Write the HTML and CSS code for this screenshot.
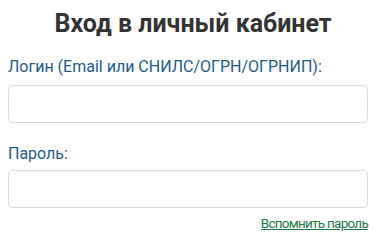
FILE: index.html
```html
<!DOCTYPE html>
<html lang="ru">
<head>
<meta charset="utf-8">
<title>Вход в личный кабинет</title>
<link rel="stylesheet" href="styles.css">
</head>
<body>
<div class="login">
  <h1 class="title">Вход в личный кабинет</h1>
  <label class="label label-login" for="login">Логин (Email или СНИЛС/ОГРН/ОГРНИП):</label>
  <input class="field field-login" id="login" type="text">
  <label class="label label-pass" for="pass">Пароль:</label>
  <input class="field field-pass" id="pass" type="password">
  <div class="links"><a class="remind" href="#">Вспомнить пароль</a></div>
</div>
</body>
</html>
```
FILE: styles.css
```css
html, body { margin: 0; padding: 0; background: #fff; }
body { font-family: Roboto, "Open Sans", sans-serif; }
.login { padding: 0 9px 0 8px; display: flex; flex-direction: column; }
.title {
  margin: 8px 0 0;
  padding-left: 10px;
  text-align: center;
  font-size: 25px;
  line-height: 32px;
  font-weight: 700;
  color: #333;
}
.label {
  font-size: 16px;
  line-height: 22px;
  color: #1d5a8c;
}
.label-login { margin-top: 16px; }
.label-pass { margin-top: 20px; }
.field {
  box-sizing: border-box;
  height: 38px;
  margin: 0;
  border: 1px solid #d9dcdf;
  border-radius: 4px;
  background: #fff;
  box-shadow: inset 0 1px 2px rgba(0,0,0,0.04);
}
.field-login { margin-top: 7px; }
.field-pass { margin-top: 5px; }
.links { display: flex; justify-content: flex-end; margin-top: 6px; }
.remind { font-size: 13.5px; line-height: 18px; color: #1f7a4a; letter-spacing: -0.75px; }
```
